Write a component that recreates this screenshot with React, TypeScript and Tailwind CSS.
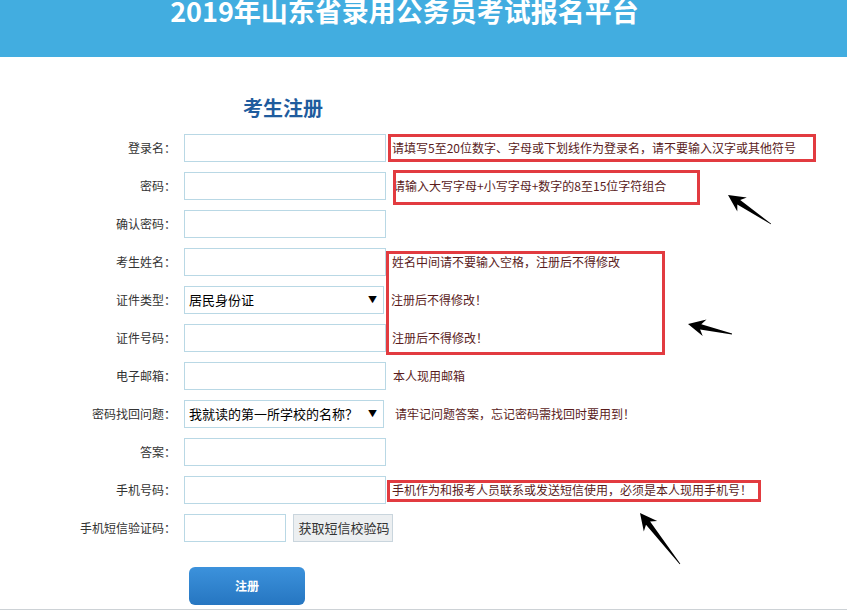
import React from 'react';

const CJK = '"Noto Sans CJK SC", "Noto Sans", sans-serif';

type Row = {
  label: string;
  control: 'input' | 'select' | 'sms';
  value?: string;
  hint?: string;
  hintClass?: string;
};

const rows: Row[] = [
  { label: '登录名：', control: 'input', hint: '请填写5至20位数字、字母或下划线作为登录名，请不要输入汉字或其他符号', hintClass: 'ml-[6px]' },
  { label: '密码：', control: 'input', hint: '请输入大写字母+小写字母+数字的8至15位字符组合', hintClass: 'ml-[7px]' },
  { label: '确认密码：', control: 'input' },
  { label: '考生姓名：', control: 'input', hint: '姓名中间请不要输入空格，注册后不得修改', hintClass: 'ml-[6px]' },
  { label: '证件类型：', control: 'select', value: '居民身份证', hint: '注册后不得修改！', hintClass: 'ml-[7px]' },
  { label: '证件号码：', control: 'input', hint: '注册后不得修改！', hintClass: 'ml-[6px]' },
  { label: '电子邮箱：', control: 'input', hint: '本人现用邮箱', hintClass: 'ml-[7px]' },
  { label: '密码找回问题：', control: 'select', value: '我就读的第一所学校的名称？', hint: '请牢记问题答案，忘记密码需找回时要用到！', hintClass: 'ml-[11px]' },
  { label: '答案：', control: 'input' },
  { label: '手机号码：', control: 'input', hint: '手机作为和报考人员联系或发送短信使用，必须是本人现用手机号！', hintClass: 'ml-[6px]' },
  { label: '手机短信验证码：', control: 'sms' },
];

// red annotation boxes drawn over the form
const boxes = [
  'left-[388px] top-[134px] w-[428px] h-[28px]',
  'left-[393px] top-[170px] w-[307px] h-[35px]',
  'left-[386px] top-[251px] w-[279px] h-[104px]',
  'left-[387px] top-[480px] w-[374px] h-[22px]',
];

function arrowPoints(tx: number, ty: number, ex: number, ey: number) {
  const dx = ex - tx;
  const dy = ey - ty;
  const len = Math.hypot(dx, dy);
  const ux = dx / len;
  const uy = dy / len;
  const nx = -uy;
  const ny = ux;
  const p = (a: number, b: number) => `${(tx + ux * a + nx * b).toFixed(1)},${(ty + uy * a + ny * b).toFixed(1)}`;
  return [p(0, 0), p(17, 8.5), p(13, 2.6), p(len, 0.4), p(len, -0.4), p(13, -2.6), p(17, -8.5)].join(' ');
}

const arrows = [
  [728, 195, 771, 224],
  [688, 324, 732, 334],
  [640, 513, 680, 564],
];

function Control({ row }: { row: Row }) {
  if (row.control === 'select') {
    return (
      <div className="relative flex h-[28px] w-[200px] items-center border border-[#b9d8e5] bg-white pl-[4px] text-[13px] text-black">
        {row.value}
        <span className="absolute right-[6px] top-[8px] text-[9px] leading-none">▼</span>
      </div>
    );
  }
  if (row.control === 'sms') {
    return (
      <div className="flex items-center">
        <input className="h-[28px] w-[102px] border border-[#b9d8e5] bg-white outline-none" />
        <button className="ml-[7px] h-[28px] w-[100px] border border-[#c9d5dd] bg-[#eceff1] pl-[2px] text-[13px] text-[#333]">
          获取短信校验码
        </button>
      </div>
    );
  }
  return <input className="h-[28px] w-[202px] border border-[#b9d8e5] bg-white outline-none" />;
}

export default function App() {
  return (
    <div className="relative h-[611px] w-full overflow-hidden bg-white" style={{ fontFamily: CJK }}>
      <header className="flex h-[57px] justify-center bg-[#42ade0] pr-[38px]">
        <h1 className="-mt-[3px] text-[27px] font-bold leading-[27px] text-white">2019年山东省录用公务员考试报名平台</h1>
      </header>

      <h2 className="ml-[243px] mt-[37px] text-[20px] font-bold leading-[28px] text-[#1f5c9e]">考生注册</h2>

      <form className="mt-[12px] flex flex-col gap-[10px]">
        {rows.map((row) => (
          <div key={row.label} className="flex h-[28px] items-center">
            <label className="w-[176px] text-right text-[12px] text-[#333]">{row.label}</label>
            <div className="ml-[8px]">
              <Control row={row} />
            </div>
            {row.hint && <span className={`text-[12px] text-[#5a1c1c] ${row.hintClass}`}>{row.hint}</span>}
          </div>
        ))}
      </form>

      <button className="ml-[189px] mt-[25px] h-[38px] w-[116px] rounded-[6px] bg-gradient-to-b from-[#3c92dc] to-[#2676c1] text-[12px] font-bold text-white">
        注册
      </button>

      <div className="absolute bottom-[1px] left-0 right-0 h-[1px] bg-[#cdd2d6]" />

      {boxes.map((b) => (
        <div key={b} className={`pointer-events-none absolute border-[3px] border-[#e23b40] ${b}`} />
      ))}

      <svg className="pointer-events-none absolute left-0 top-0" width="847" height="611">
        {arrows.map(([a, b, c, d]) => (
          <polygon key={a} points={arrowPoints(a, b, c, d)} fill="#000" />
        ))}
      </svg>
    </div>
  );
}
